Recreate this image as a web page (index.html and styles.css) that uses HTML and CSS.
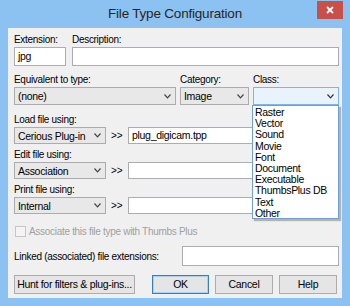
FILE: index.html
```html
<!DOCTYPE html>
<html lang="en">
<head>
  <meta charset="UTF-8">
  <title>File Type Configuration</title>
  <link rel="stylesheet" href="styles.css">
</head>
<body>
  <div class="window">
    <div class="titlebar">
      <span></span>
      <span class="title">File Type Configuration</span>
      <span class="close">
        <svg width="10" height="10" viewBox="0 0 10 10"><path d="M2 2 L8 8 M8 2 L2 8" stroke="#fff" stroke-width="1.8"/></svg>
      </span>
    </div>

    <div class="client">
      <div class="row first">
        <div class="field ext">
          <div class="label">Extension:</div>
          <div class="edit tall">jpg</div>
        </div>
        <div class="field desc">
          <div class="label">Description:</div>
          <div class="edit tall"></div>
        </div>
      </div>

      <div class="row second">
        <div class="field equiv">
          <div class="label">Equivalent to type:</div>
          <div class="combo"><span>(none)</span><svg class="chev" width="7" height="5" viewBox="0 0 7 5"><path d="M0.5 0.5 L3.5 3.8 L6.5 0.5" fill="none" stroke="#444" stroke-width="1.2"/></svg></div>
        </div>
        <div class="field cat">
          <div class="label">Category:</div>
          <div class="combo"><span>Image</span><svg class="chev" width="7" height="5" viewBox="0 0 7 5"><path d="M0.5 0.5 L3.5 3.8 L6.5 0.5" fill="none" stroke="#444" stroke-width="1.2"/></svg></div>
        </div>
        <div class="field cls">
          <div class="label">Class:</div>
          <div class="combo focused"><span></span><svg class="chev" width="7" height="5" viewBox="0 0 7 5"><path d="M0.5 0.5 L3.5 3.8 L6.5 0.5" fill="none" stroke="#333" stroke-width="1.2"/></svg></div>
          <ul class="droplist">
            <li>Raster</li>
            <li>Vector</li>
            <li>Sound</li>
            <li>Movie</li>
            <li>Font</li>
            <li>Document</li>
            <li>Executable</li>
            <li>ThumbsPlus DB</li>
            <li>Text</li>
            <li>Other</li>
          </ul>
        </div>
      </div>

      <div class="using load">
        <div class="label">Load file using:</div>
        <div class="using-row">
          <div class="combo"><span>Cerious Plug-in</span><svg class="chev" width="7" height="5" viewBox="0 0 7 5"><path d="M0.5 0.5 L3.5 3.8 L6.5 0.5" fill="none" stroke="#444" stroke-width="1.2"/></svg></div>
          <span class="arrows">&gt;&gt;</span>
          <div class="edit">plug_digicam.tpp</div>
        </div>
      </div>

      <div class="using">
        <div class="label">Edit file using:</div>
        <div class="using-row">
          <div class="combo"><span>Association</span><svg class="chev" width="7" height="5" viewBox="0 0 7 5"><path d="M0.5 0.5 L3.5 3.8 L6.5 0.5" fill="none" stroke="#444" stroke-width="1.2"/></svg></div>
          <span class="arrows">&gt;&gt;</span>
          <div class="edit"></div>
        </div>
      </div>

      <div class="using">
        <div class="label">Print file using:</div>
        <div class="using-row">
          <div class="combo"><span>Internal</span><svg class="chev" width="7" height="5" viewBox="0 0 7 5"><path d="M0.5 0.5 L3.5 3.8 L6.5 0.5" fill="none" stroke="#444" stroke-width="1.2"/></svg></div>
          <span class="arrows">&gt;&gt;</span>
          <div class="edit"></div>
        </div>
      </div>

      <div class="check">
        <span class="box"></span>
        <span>Associate this file type with Thumbs Plus</span>
      </div>

      <div class="linked">
        <span>Linked (associated) file extensions:</span>
        <div class="edit tall"></div>
      </div>

      <div class="buttons">
        <div class="btn hunt">Hunt for filters &amp; plug-ins...</div>
        <div class="btn ok">OK</div>
        <div class="btn">Cancel</div>
        <div class="btn">Help</div>
      </div>
    </div>
  </div>
</body>
</html>
```

FILE: styles.css
```css
body {
  margin: 0;
  font-family: "Liberation Sans", Arial, sans-serif;
  font-size: 10px;
  letter-spacing: -0.3px;
  color: #000;
}
.window {
  width: 350px;
  height: 306px;
  background: #8cc2f1;
  padding: 0 8px 8px 8px;
  box-sizing: border-box;
  display: flex;
  flex-direction: column;
}
.titlebar {
  height: 28px;
  display: grid;
  grid-template-columns: 1fr auto 1fr;
  margin: 0 -8px;
}
.title {
  font-size: 13.5px;
  letter-spacing: -0.2px;
  color: #262626;
  line-height: 28px;
}
.close {
  justify-self: end;
  align-self: start;
  width: 26px;
  height: 18px;
  margin: 1px 7px 0 0;
  background: #c7504b;
  display: flex;
  align-items: center;
  justify-content: center;
}
.client {
  flex: 1;
  background: #f0f0f0;
  padding: 0 3px 0 6px;
  position: relative;
}
.label {
  height: 14px;
  line-height: 14px;
  padding-left: 0;
}
.row {
  display: flex;
}
.row.first {
  margin-top: 5px;
  gap: 6px;
}
.row.second {
  margin-top: 7px;
  gap: 4px;
}
.field.ext { width: 52px; }
.field.desc { flex: 1; }
.field.equiv { width: 162px; }
.field.cat { width: 69px; }
.field.cls { width: 86px; position: relative; }

.edit {
  height: 17px;
  line-height: 15px;
  border: 1px solid #abadb3;
  background: #fff;
  box-sizing: border-box;
  padding: 0 3px;
  font-size: 10.5px;
}
.edit.tall {
  height: 19px;
  line-height: 17px;
}
.combo {
  height: 18px;
  border: 1px solid #acacac;
  background: #e8e8e8;
  box-sizing: border-box;
  display: flex;
  align-items: center;
  justify-content: space-between;
  padding: 0 4px 0 3px;
  font-size: 10.5px;
}
.combo.focused {
  border-color: #7eb4ea;
  background: #e9f3fc;
}
.chev {
  flex: none;
}
.droplist {
  position: absolute;
  left: -1px;
  top: 32px;
  width: 87px;
  height: 114px;
  margin: 0;
  padding: 1px 0 0 2px;
  box-sizing: border-box;
  list-style: none;
  background: #fff;
  border: 1px solid #6d9ed6;
  box-shadow: 2px 2px 1px rgba(0, 0, 0, 0.25);
  font-size: 10.5px;
  z-index: 2;
}
.droplist li {
  height: 11.2px;
  line-height: 11.2px;
}
.using.load {
  margin-top: 8px;
}
.using {
  margin-top: 4px;
}
.using .combo {
  width: 92px;
  height: 17px;
}
.using-row {
  display: flex;
  align-items: center;
}
.arrows {
  width: 22px;
  padding-left: 5px;
  box-sizing: border-box;
  font-size: 10px;
  letter-spacing: 0;
}
.using-row .edit {
  flex: 1;
}
.check {
  margin-top: 10px;
  height: 14px;
  display: flex;
  align-items: center;
  gap: 3px;
  color: #a0a0a0;
  padding-left: 1px;
}
.box {
  width: 11px;
  height: 11px;
  border: 1px solid #c6c6c6;
  background: #f4f4f4;
  box-sizing: border-box;
}
.linked {
  margin-top: 8px;
  display: flex;
  align-items: center;
  justify-content: space-between;
  height: 20px;
}
.linked .edit {
  width: 157px;
  height: 20px;
}
.buttons {
  margin-top: 9px;
  display: flex;
  gap: 6px;
}
.btn {
  height: 19px;
  width: 58px;
  border: 1px solid #acacac;
  background: #e5e5e5;
  box-sizing: border-box;
  text-align: center;
  line-height: 17px;
  font-size: 10.5px;
}
.btn.hunt {
  width: 121px;
  margin-right: 11px;
}
.btn.ok {
  width: 57px;
  border-color: #3c7fb1;
  box-shadow: inset 0 0 0 1px #a8d2f3;
}
```
